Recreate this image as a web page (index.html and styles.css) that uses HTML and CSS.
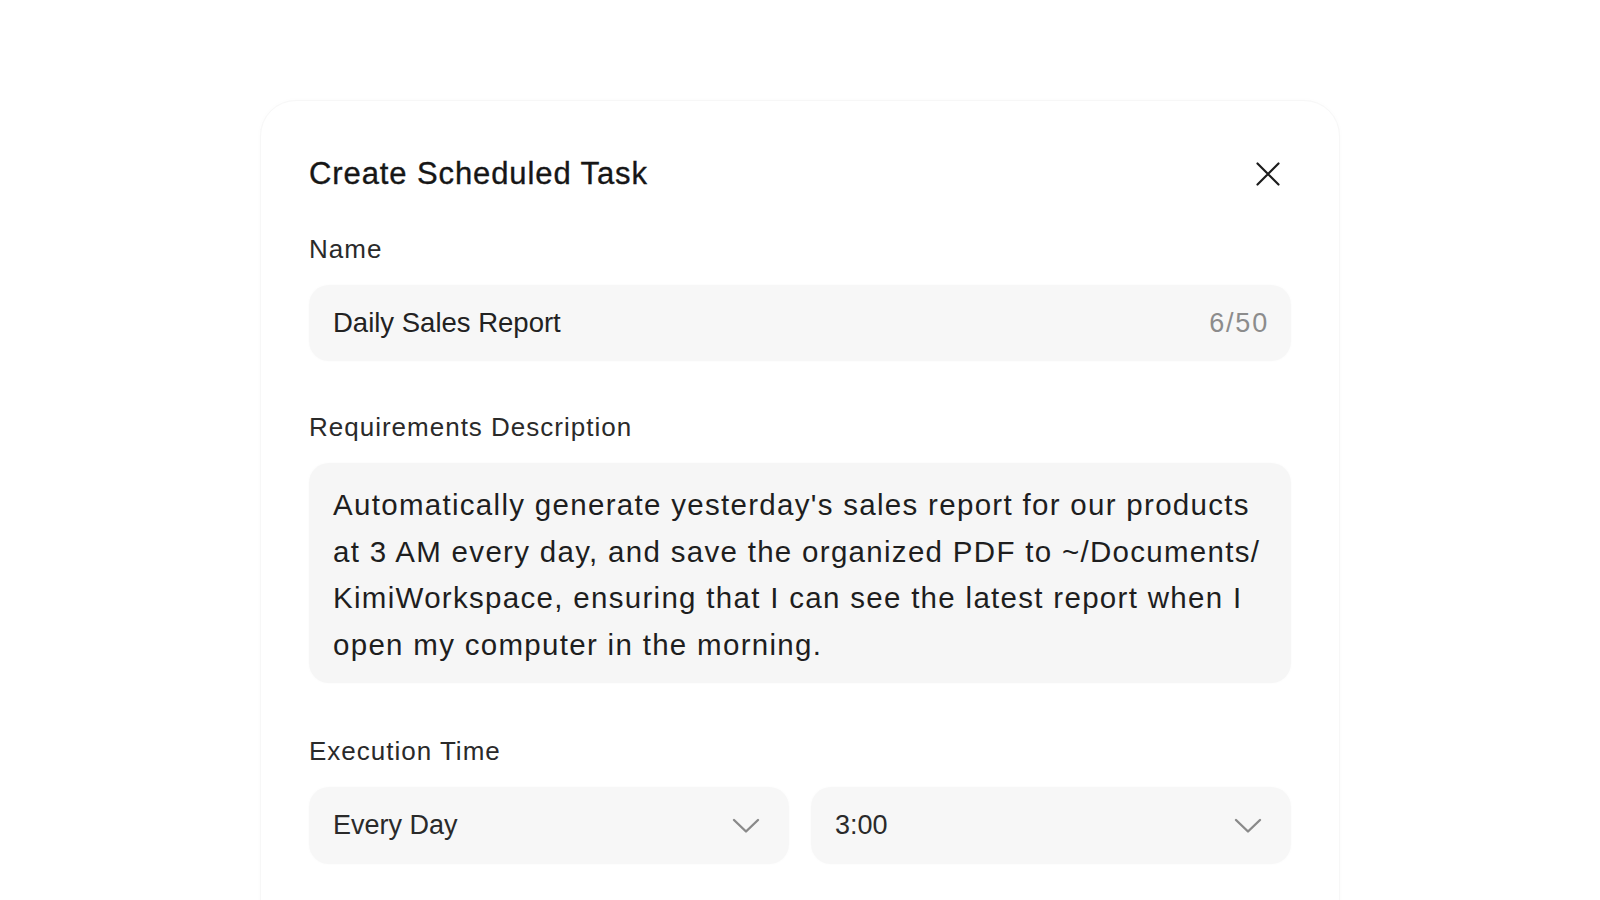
FILE: index.html
```html
<!DOCTYPE html>
<html lang="en">
<head>
<meta charset="utf-8">
<title>Create Scheduled Task</title>
<link rel="stylesheet" href="styles.css">
</head>
<body>
<main class="page">
  <section class="dialog">
    <header class="dialog-head">
      <h1 class="dialog-title">Create Scheduled Task</h1>
      <button class="close-btn" type="button" aria-label="Close">
        <svg width="24" height="24" viewBox="0 0 24 24" fill="none" stroke="#1c1c1c" stroke-width="2.2" stroke-linecap="round">
          <path d="M1.5 1.5 L22.5 22.5 M22.5 1.5 L1.5 22.5"/>
        </svg>
      </button>
    </header>

    <div class="field field-first">
      <div class="field-label">Name</div>
      <div class="text-input">
        <span class="input-value">Daily Sales Report</span>
        <span class="input-count">6/50</span>
      </div>
    </div>

    <div class="field field-desc">
      <div class="field-label">Requirements Description</div>
      <div class="text-area">Automatically generate yesterday's sales report for our products<br>at 3 AM every day, and save the organized PDF to ~/Documents/<br>KimiWorkspace, ensuring that I can see the latest report when I<br>open my computer in the morning.</div>
    </div>

    <div class="field field-time">
      <div class="field-label">Execution Time</div>
      <div class="select-row">
        <div class="select-box">
          <span class="select-value">Every Day</span>
          <svg class="chevron" width="28" height="16" viewBox="0 0 28 16" fill="none" stroke="#8a8a8a" stroke-width="2.4" stroke-linecap="round" stroke-linejoin="round">
            <path d="M2 2 L14 13.5 L26 2"/>
          </svg>
        </div>
        <div class="select-box">
          <span class="select-value">3:00</span>
          <svg class="chevron" width="28" height="16" viewBox="0 0 28 16" fill="none" stroke="#8a8a8a" stroke-width="2.4" stroke-linecap="round" stroke-linejoin="round">
            <path d="M2 2 L14 13.5 L26 2"/>
          </svg>
        </div>
      </div>
    </div>
  </section>
</main>
</body>
</html>
```

FILE: styles.css
```css
html, body {
  margin: 0;
  padding: 0;
  background: #ffffff;
}

body {
  font-family: "Liberation Sans", Arial, sans-serif;
  color: #1f1f1f;
  overflow: hidden;
  height: 900px;
}

.page {
  padding-top: 100px;
}

.dialog {
  width: 1080px;
  min-height: 900px;
  margin: 0 auto;
  box-sizing: border-box;
  padding: 53px 48px 0;
  background: #ffffff;
  border: 1px solid #f7f7f7;
  border-radius: 36px;
  box-shadow: 0 0 5px rgba(0, 0, 0, 0.02);
}

.dialog-head {
  display: flex;
  align-items: center;
  justify-content: space-between;
  height: 40px;
}

.dialog-title {
  margin: 0;
  font-size: 31px;
  line-height: 40px;
  font-weight: 400;
  letter-spacing: 0.9px;
  color: #161616;
  -webkit-text-stroke: 0.35px #161616;
}

.close-btn {
  width: 46px;
  height: 40px;
  padding: 0;
  border: 0;
  background: transparent;
  display: flex;
  align-items: center;
  justify-content: center;
}

.field {
  display: flex;
  flex-direction: column;
  gap: 19px;
}

.field-first {
  margin-top: 38px;
}

.field-desc {
  margin-top: 49px;
}

.field-time {
  margin-top: 51px;
}

.field-label {
  font-size: 26px;
  line-height: 34px;
  letter-spacing: 1px;
  color: #2a2a2a;
}

.text-input,
.select-box {
  display: flex;
  align-items: center;
  justify-content: space-between;
  background: #f7f7f7;
  border-radius: 20px;
  box-shadow: 0 0 3px rgba(0, 0, 0, 0.025);
}

.text-input {
  height: 76px;
  padding: 0 22px 0 24px;
}

.input-value {
  font-size: 27.5px;
  color: #222222;
}

.input-count {
  font-size: 27px;
  letter-spacing: 1.8px;
  color: #8c8c8c;
}

.text-area {
  height: 220px;
  box-sizing: border-box;
  padding: 19px 24px 17px;
  background: #f6f6f6;
  border-radius: 20px;
  box-shadow: 0 0 3px rgba(0, 0, 0, 0.025);
  font-size: 29.5px;
  line-height: 46.5px;
  letter-spacing: 1.3px;
  color: #1e1e1e;
  white-space: nowrap;
}

.select-row {
  display: grid;
  grid-template-columns: 1fr 1fr;
  gap: 22px;
}

.select-box {
  height: 77px;
  padding: 0 29px 0 24px;
}

.select-value {
  font-size: 27px;
  color: #2a2a2a;
}

.chevron {
  display: block;
}
```
